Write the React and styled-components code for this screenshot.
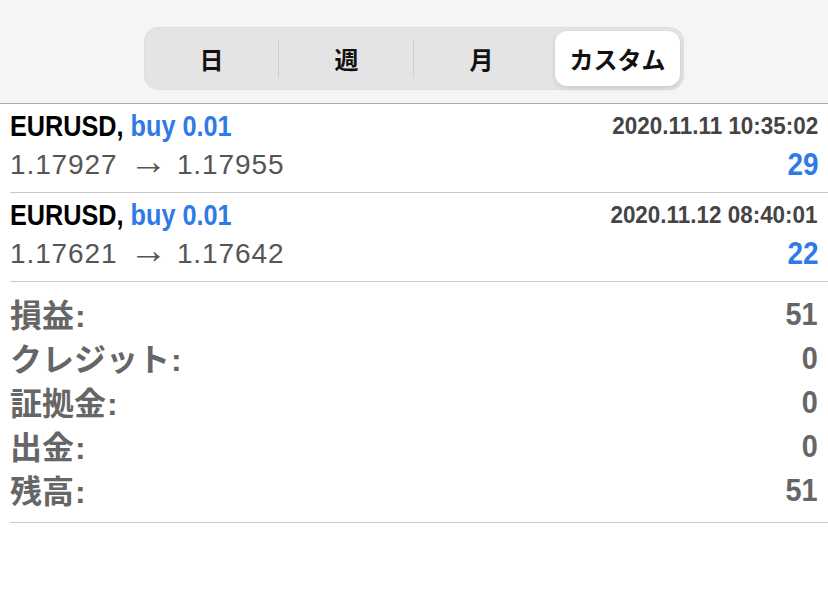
import React from 'react'
import styled, { createGlobalStyle } from 'styled-components'

const GlobalStyle = createGlobalStyle`
  body {
    margin: 0;
    background: #ffffff;
    font-family: 'Liberation Sans', 'Noto Sans CJK JP', sans-serif;
  }
`

const Page = styled.div`
  width: 828px;
  min-height: 614px;
  background: #fff;
`

const Header = styled.div`
  height: 103px;
  background: #f5f5f5;
  border-bottom: 1px solid #a8a8a8;
  display: flex;
  justify-content: center;
  align-items: flex-start;
`

const Segmented = styled.div`
  width: 540px;
  height: 63px;
  margin-top: 27px;
  box-sizing: border-box;
  padding: 4px 0;
  border-radius: 15px;
  background: #e4e4e4;
  box-shadow: inset 0 0 0 1px #dedede;
  display: grid;
  grid-template-columns: repeat(4, 1fr);
`

const Segment = styled.div`
  position: relative;
  display: flex;
  align-items: center;
  justify-content: center;
  border-radius: 12px;
  margin: ${p => (p.active ? '0 4px 0 6px' : '0')};
  font-family: 'Noto Sans CJK JP', sans-serif;
  font-weight: 700;
  font-size: 24px;
  color: #111;
  background: ${p => (p.active ? '#ffffff' : 'transparent')};
  box-shadow: ${p => (p.active ? '0 2px 5px rgba(0,0,0,0.12)' : 'none')};

  &::after {
    content: '';
    display: ${p => (p.divider ? 'block' : 'none')};
    position: absolute;
    right: 0;
    top: 8px;
    bottom: 8px;
    width: 1px;
    background: #cfcfcf;
  }
`

const Row = styled.div`
  margin-left: 10px;
  padding: 4px 10px 0 0;
  height: 89px;
  box-sizing: border-box;
  border-bottom: 1px solid #c8c8c8;
  display: grid;
  grid-template-columns: 1fr auto;
  grid-template-rows: 36px 42px;
  align-items: center;
`

const Condensed = styled.span`
  display: inline-block;
  white-space: nowrap;
  font-family: 'Liberation Sans', sans-serif;
  font-weight: 700;
  transform: scaleX(${p => p.scale});
  transform-origin: ${p => (p.right ? 'right' : 'left')} center;
`

const Symbol = styled(Condensed)`
  font-size: 29px;
  color: #000;
  justify-self: start;
`

const Side = styled.span`
  color: #2e7ae6;
`

const Time = styled(Condensed)`
  font-size: 24px;
  color: #444;
  justify-self: end;
`

const Prices = styled.div`
  font-family: 'Liberation Sans', sans-serif;
  font-size: 28px;
  letter-spacing: 0.9px;
  color: #555;
  line-height: 42px;
  white-space: nowrap;
`

const Arrow = styled.span`
  font-size: 38px;
  line-height: 0;
  letter-spacing: 0;
  margin: 0 1px 0 3px;
`

const Profit = styled(Condensed)`
  font-size: 31px;
  color: #2e7ae6;
  justify-self: end;
`

const Summary = styled.div`
  margin-left: 10px;
  padding: 10px 10px 10px 0;
  border-bottom: 1px solid #c8c8c8;
  display: flex;
  flex-direction: column;
`

const SumRow = styled.div`
  display: flex;
  justify-content: space-between;
  align-items: center;
  height: 44px;
  color: #666;
`

const SumLabel = styled.span`
  font-family: 'Noto Sans CJK JP', sans-serif;
  font-weight: 700;
  font-size: 32px;
  line-height: 44px;
`

const Colon = styled.span`
  font-family: 'Liberation Sans', sans-serif;
  margin-left: 1px;
`

const SumValue = styled(Condensed)`
  font-size: 32px;
`

const deals = [
  { sym: 'EURUSD', side: 'buy 0.01', time: '2020.11.11 10:35:02', open: '1.17927', close: '1.17955', profit: '29' },
  { sym: 'EURUSD', side: 'buy 0.01', time: '2020.11.12 08:40:01', open: '1.17621', close: '1.17642', profit: '22' },
]

const totals = [
  ['損益', '51'],
  ['クレジット', '0'],
  ['証拠金', '0'],
  ['出金', '0'],
  ['残高', '51'],
]

export default function App() {
  return (
    <Page>
      <GlobalStyle />
      <Header>
        <Segmented>
          <Segment divider>日</Segment>
          <Segment divider>週</Segment>
          <Segment>月</Segment>
          <Segment active>カスタム</Segment>
        </Segmented>
      </Header>
      {deals.map((d, i) => (
        <Row key={i}>
          <Symbol scale={0.87}>
            {d.sym}, <Side>{d.side}</Side>
          </Symbol>
          <Time scale={0.935} right>
            {d.time}
          </Time>
          <Prices>
            {d.open} <Arrow>→</Arrow> {d.close}
          </Prices>
          <Profit scale={0.9} right>
            {d.profit}
          </Profit>
        </Row>
      ))}
      <Summary>
        {totals.map(([label, value]) => (
          <SumRow key={label}>
            <SumLabel>
              {label}
              <Colon>:</Colon>
            </SumLabel>
            <SumValue scale={0.9} right>
              {value}
            </SumValue>
          </SumRow>
        ))}
      </Summary>
    </Page>
  )
}
